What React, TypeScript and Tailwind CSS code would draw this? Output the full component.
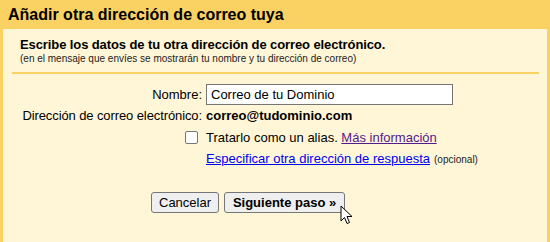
export default function App() {
  return (
    <div className="w-[550px] h-[242px] bg-[#fad163] flex flex-col font-['Liberation_Sans',Arial,sans-serif] text-black relative">
      <div className="h-[29px] shrink-0 pl-[8px] flex items-center text-[16px] font-bold leading-none pt-[1px]">
        Añadir otra dirección de correo tuya
      </div>
      <div className="flex-1 mx-[3px] bg-[#fff6d7] pl-[9px] pr-[8px]">
        <div className="pl-[8px] pt-[8px]">
          <div className="text-[13px] font-bold leading-[16px] tracking-[-0.1px]">
            Escribe los datos de tu otra dirección de correo electrónico.
          </div>
          <div className="text-[10px] leading-[11px] text-[#222]">
            (en el mensaje que envíes se mostrarán tu nombre y tu dirección de correo)
          </div>
        </div>
        <div className="h-[2px] bg-[#fad163] mt-[8px]" />

        <div className="grid grid-cols-[190px_1fr] gap-x-[4px] mt-[10px] text-[13px]">
          <div className="h-[21px] flex items-center justify-end">Nombre:</div>
          <div className="h-[21px] flex items-center">
            <div className="w-[247px] h-[21px] border border-[#767676] bg-white flex items-center pl-[4px]">
              Correo de tu Dominio
            </div>
          </div>

          <div className="h-[22px] flex items-center justify-end tracking-[-0.1px]">Dirección de correo electrónico:</div>
          <div className="h-[22px] flex items-center font-bold">correo@tudominio.com</div>

          <div className="h-[21px] flex items-center justify-end pr-[4px]">
            <span className="w-[13px] h-[13px] border border-[#767676] rounded-[2px] bg-white" />
          </div>
          <div className="h-[21px] flex items-center">
            Tratarlo como un alias.&nbsp;
            <span className="text-[#551a8b] underline">Más información</span>
          </div>

          <div className="h-[22px]" />
          <div className="h-[22px] flex items-center">
            <span className="text-[#0000ee] underline">Especificar otra dirección de respuesta</span>
            <span className="text-[10px] ml-[4px] text-[#222]">(opcional)</span>
          </div>
        </div>

        <div className="flex gap-[5px] ml-[139px] mt-[22px] text-[13px]">
          <button className="h-[21px] px-[7px] border border-[#767676] bg-[#efefef] rounded-[3px] leading-none">
            Cancelar
          </button>
          <button className="h-[21px] w-[121px] border border-[#767676] bg-[#efefef] rounded-[3px] font-bold leading-none">
            Siguiente paso »
          </button>
        </div>
      </div>

      <svg className="absolute left-[340px] top-[205px]" width="13" height="21" viewBox="0 0 13 21">
        <path
          d="M1 1 L1 16 L4.5 12.5 L7 18.5 L9.5 17.5 L7 11.5 L12 11.5 Z"
          fill="white"
          stroke="black"
          strokeWidth="1"
          strokeLinejoin="miter"
        />
      </svg>
    </div>
  )
}
